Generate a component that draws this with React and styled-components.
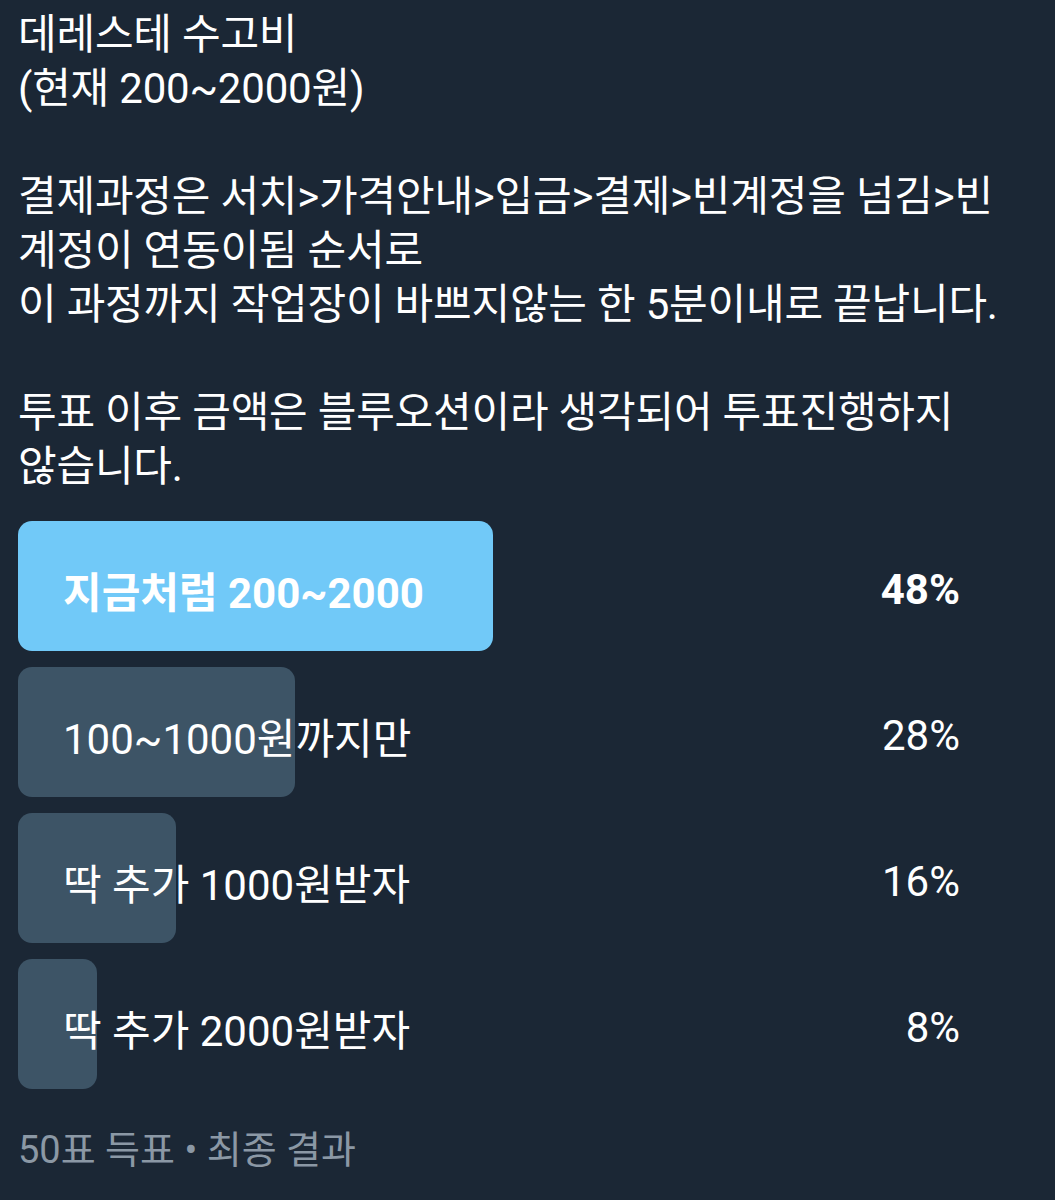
import React from "react";
import styled, { createGlobalStyle } from "styled-components";

const GlobalStyle = createGlobalStyle`
  html, body {
    margin: 0;
    padding: 0;
    background: #1b2735;
  }
  body {
    font-family: Roboto, "Noto Sans CJK KR", sans-serif;
    color: #ffffff;
  }
`;

const options = [
  { label: "지금처럼 200~2000", percent: 48, winner: true },
  { label: "100~1000원까지만", percent: 28 },
  { label: "딱 추가 1000원받자", percent: 16 },
  { label: "딱 추가 2000원받자", percent: 8 },
];

const Page = styled.div`
  width: 1055px;
  height: 1200px;
  box-sizing: border-box;
  padding: 8px 0 0 18px;
  overflow: hidden;
`;

const Body = styled.p`
  margin: 0;
  font-size: 42px;
  line-height: 54px;
  white-space: pre-line;
  letter-spacing: -0.2px;
`;

const Poll = styled.div`
  display: flex;
  flex-direction: column;
  gap: 16px;
  margin-top: 27px;
  width: 990px;
`;

const Row = styled.div`
  position: relative;
  display: flex;
  align-items: center;
  justify-content: space-between;
  height: 130px;
  padding: 0 48px 0 45px;
`;

const Bar = styled.div`
  position: absolute;
  left: 0;
  top: 0;
  bottom: 0;
  border-radius: 14px;
  background: ${(p) => (p.$winner ? "#71c9f8" : "#3d5466")};
`;

const Label = styled.span`
  position: relative;
  top: 3px;
  font-size: 42px;
  font-weight: ${(p) => (p.$winner ? 700 : 400)};
`;

const Percent = styled(Label)``;

const Footer = styled.div`
  margin-top: 30px;
  font-size: 38px;
  color: #8b98a5;
`;

export default function App() {
  return (
    <Page>
      <GlobalStyle />
      <Body>
        {`데레스테 수고비
(현재 200~2000원)

결제과정은 서치>가격안내>입금>결제>빈계정을 넘김>빈
계정이 연동이됨 순서로
이 과정까지 작업장이 바쁘지않는 한 5분이내로 끝납니다.

투표 이후 금액은 블루오션이라 생각되어 투표진행하지
않습니다.`}
      </Body>
      <Poll>
        {options.map((o) => (
          <Row key={o.label}>
            <Bar $winner={o.winner} style={{ width: `${o.percent}%` }} />
            <Label $winner={o.winner}>{o.label}</Label>
            <Percent $winner={o.winner}>{o.percent}%</Percent>
          </Row>
        ))}
      </Poll>
      <Footer>50표 득표 • 최종 결과</Footer>
    </Page>
  );
}
